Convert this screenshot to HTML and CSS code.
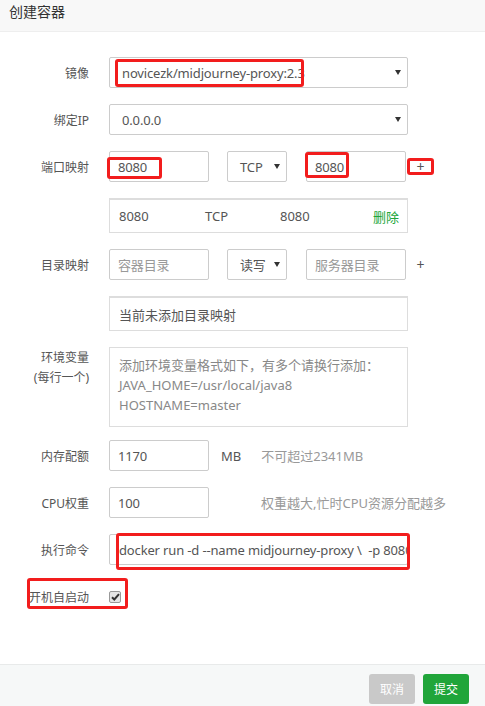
FILE: index.html
```html
<!DOCTYPE html>
<html lang="zh-CN">
<head>
    <meta charset="UTF-8">
    <meta name="viewport" content="width=device-width, initial-scale=1.0">
    <title>创建容器</title>
    <link rel="stylesheet" href="styles.css">
</head>
<body>
    <div class="layer">
        <div class="layer-title">创建容器</div>

        <div class="layer-content">
            <div class="line">
                <span class="tname">镜像</span>
                <div class="field select wide">
                    <span>novicezk/midjourney-proxy:2.3</span>
                    <svg class="arrow" width="6" height="5" viewBox="0 0 6 5"><path d="M0 0h6L3 5z" fill="#333"/></svg>
                    <span class="mark mark-image"></span>
                </div>
            </div>

            <div class="line">
                <span class="tname">绑定IP</span>
                <div class="field select wide">
                    <span>0.0.0.0</span>
                    <svg class="arrow" width="6" height="5" viewBox="0 0 6 5"><path d="M0 0h6L3 5z" fill="#333"/></svg>
                </div>
            </div>

            <div class="line">
                <span class="tname">端口映射</span>
                <div class="field short">
                    <span>8080</span>
                    <span class="mark mark-port1"></span>
                </div>
                <div class="field select proto">
                    <span>TCP</span>
                    <svg class="arrow" width="6" height="5" viewBox="0 0 6 5"><path d="M0 0h6L3 5z" fill="#333"/></svg>
                </div>
                <div class="field short">
                    <span>8080</span>
                    <span class="mark mark-port2"></span>
                </div>
                <span class="plus">+<span class="mark mark-plus"></span></span>
            </div>

            <div class="line">
                <span class="tname"></span>
                <div class="list-box">
                    <span class="col-a">8080</span>
                    <span class="col-b">TCP</span>
                    <span class="col-c">8080</span>
                    <a class="del">删除</a>
                </div>
            </div>

            <div class="line">
                <span class="tname">目录映射</span>
                <div class="field short placeholder">容器目录</div>
                <div class="field select proto">
                    <span>读写</span>
                    <svg class="arrow" width="6" height="5" viewBox="0 0 6 5"><path d="M0 0h6L3 5z" fill="#333"/></svg>
                </div>
                <div class="field short placeholder">服务器目录</div>
                <span class="plus">+</span>
            </div>

            <div class="line">
                <span class="tname"></span>
                <div class="list-box">当前未添加目录映射</div>
            </div>

            <div class="line line-top">
                <span class="tname two-line">环境变量<br>(每行一个)</span>
                <div class="textarea">添加环境变量格式如下，有多个请换行添加：<br>JAVA_HOME=/usr/local/java8<br>HOSTNAME=master</div>
            </div>

            <div class="line">
                <span class="tname">内存配额</span>
                <div class="field short">1170</div>
                <span class="unit">MB</span>
                <span class="hint">不可超过2341MB</span>
            </div>

            <div class="line">
                <span class="tname">CPU权重</span>
                <div class="field short">100</div>
                <span class="hint hint-cpu">权重越大,忙时CPU资源分配越多</span>
            </div>

            <div class="line">
                <span class="tname">执行命令</span>
                <div class="field wide cmd">
                    <span class="cmd-text">docker run -d --name midjourney-proxy \&nbsp; -p 8080</span>
                    <span class="mark mark-cmd"></span>
                </div>
            </div>

            <div class="line line-check">
                <span class="tname">开机自启动</span>
                <span class="checkbox">
                    <svg width="9" height="8" viewBox="0 0 9 8"><path d="M1 4.2l2.3 2.3L8 1.2" fill="none" stroke="#333" stroke-width="2"/></svg>
                </span>
                <span class="mark mark-check"></span>
            </div>
        </div>

        <div class="layer-btn">
            <button class="btn btn-cancel">取消</button>
            <button class="btn btn-submit">提交</button>
        </div>
    </div>
</body>
</html>
```

FILE: styles.css
```css
/* 全局 */
body {
    margin: 0;
    font-family: "Noto Sans", "Noto Sans CJK SC", sans-serif;
    font-size: 12px;
    color: #555;
    background: #fff;
}

.layer {
    width: 485px;
    height: 706px;
    display: flex;
    flex-direction: column;
}

.layer-title {
    height: 31px;
    line-height: 24px;
    padding-left: 9px;
    font-size: 14px;
    color: #333;
    background-color: #f8f8f8;
    border-bottom: 1px solid #eee;
}

.layer-content {
    flex: 1;
    padding-top: 25px;
}

/* 表单行 */
.line {
    display: flex;
    align-items: center;
    margin-bottom: 16px;
}

.line-top {
    align-items: flex-start;
    margin-bottom: 13px;
}

.tname {
    width: 109px;
    flex: none;
    box-sizing: border-box;
    padding-right: 20px;
    text-align: right;
    color: #555;
}

.two-line {
    padding-top: 1px;
    line-height: 20px;
}

.field {
    position: relative;
    box-sizing: border-box;
    height: 31px;
    border: 1px solid #ccc;
    border-radius: 2px;
    display: flex;
    align-items: center;
    padding-left: 8px;
    font-size: 13px;
    letter-spacing: -0.15px;
    color: #555;
    white-space: nowrap;
}

.wide {
    width: 299px;
}

.short {
    width: 100px;
}

.select {
    padding-left: 12px;
}

.select .arrow {
    position: absolute;
    right: 6px;
    top: 12px;
}

.proto {
    width: 60px;
    margin: 0 19px 0 18px;
}

.placeholder {
    color: #999;
}

.plus {
    position: relative;
    width: 27px;
    height: 17px;
    margin-left: 1px;
    line-height: 17px;
    text-align: center;
    font-size: 14px;
    color: #555;
}

.list-box {
    box-sizing: border-box;
    width: 299px;
    height: 35px;
    border: 1px solid #ddd;
    border-top-width: 2px;
    display: flex;
    align-items: center;
    padding: 0 8px 0 9px;
    font-size: 13px;
    color: #555;
}

.col-a {
    width: 86px;
}

.col-b {
    width: 75px;
}

.del {
    margin-left: auto;
    color: #20a53a;
    cursor: pointer;
}

.textarea {
    box-sizing: border-box;
    width: 299px;
    height: 80px;
    border: 1px solid #ddd;
    padding: 7px 9px;
    line-height: 20px;
    font-size: 13px;
    color: #888;
}

.unit {
    margin-left: 12px;
    font-size: 13px;
    color: #555;
}

.hint {
    margin-left: 20px;
    font-size: 13px;
    color: #999;
}

.hint-cpu {
    margin-left: 52px;
}

.cmd {
    padding-right: 0;
    padding-left: 9px;
}

.cmd-text {
    display: block;
    overflow: hidden;
    min-width: 0;
    flex: 1;
}

.line-check {
    position: relative;
    margin-top: 22px;
    height: 20px;
}

.checkbox {
    box-sizing: border-box;
    width: 12px;
    height: 12px;
    border: 1px solid #999;
    border-radius: 2px;
    background: #e6e6e6;
    display: flex;
    align-items: center;
    justify-content: center;
}

/* 红色标注框 */
.mark {
    position: absolute;
    box-sizing: border-box;
    border: 3px solid #f21d1d;
    border-radius: 3px;
    pointer-events: none;
}

.mark-image {
    left: 5px;
    top: 1px;
    width: 189px;
    height: 28px;
}

.mark-port1 {
    left: -3px;
    top: 5px;
    width: 55px;
    height: 22px;
}

.mark-port2 {
    left: -2px;
    top: 0;
    width: 44px;
    height: 26px;
}

.mark-plus {
    left: 0;
    top: 0;
    width: 27px;
    height: 17px;
}

.mark-cmd {
    left: 6px;
    top: -2px;
    width: 294px;
    height: 37px;
}

.mark-check {
    left: 27px;
    top: -9px;
    width: 101px;
    height: 31px;
}

/* 底部按钮 */
.layer-btn {
    height: 42px;
    box-sizing: border-box;
    border-top: 1px solid #e8eaea;
    background-color: #f6f8f8;
    display: flex;
    justify-content: flex-end;
    align-items: flex-start;
    padding: 9px 16px 0 0;
    gap: 8px;
}

.btn {
    width: 46px;
    height: 30px;
    border: none;
    border-radius: 3px;
    color: #fff;
    font-family: inherit;
    font-size: 12px;
    cursor: pointer;
}

.btn-cancel {
    background-color: #c9c9c9;
}

.btn-submit {
    background-color: #20a53a;
}
```
